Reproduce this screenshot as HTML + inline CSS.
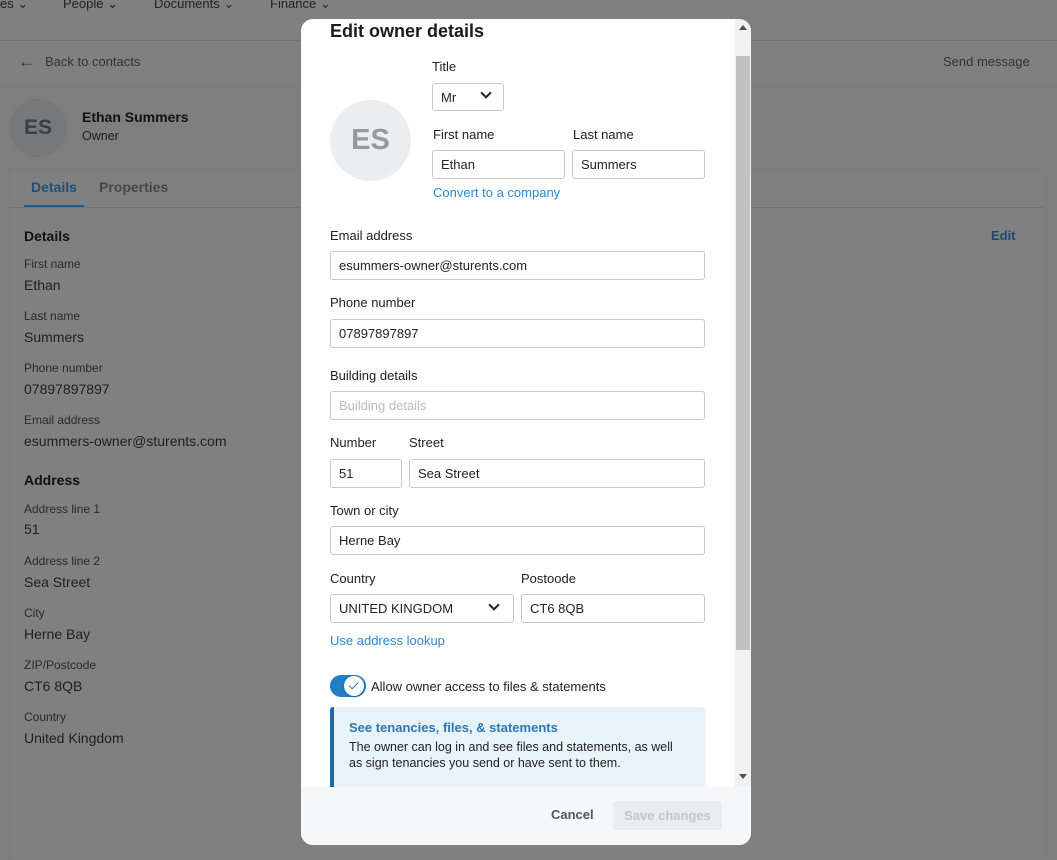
<!DOCTYPE html>
<html><head><style>
*{box-sizing:border-box;margin:0;padding:0}
body{width:1057px;height:860px;overflow:hidden;background:#808080;font-family:"Liberation Sans",sans-serif;position:relative;color:#1a1a1a}
.a{position:absolute;white-space:nowrap}
.bg{color:#1f1f1f;font-size:13px}
.in{position:absolute;border:1px solid #c8c8c8;border-radius:3px;height:29px;font-size:13px;padding:6px 8px;color:#222;background:#fff}
.chev{position:absolute;width:8px;height:8px;border-right:2px solid #222;border-bottom:2px solid #222;transform:rotate(45deg)}
.ml{font-size:13px;color:#222}
</style></head><body>
<div class="a bg" style="left:0;top:-4px;color:#222">es ⌄</div>
<div class="a bg" style="left:63px;top:-4px;color:#222">People ⌄</div>
<div class="a bg" style="left:154px;top:-4px;color:#222">Documents ⌄</div>
<div class="a bg" style="left:270px;top:-4px;color:#222">Finance ⌄</div>
<div class="a" style="left:0;top:40px;width:1057px;height:1px;background:#737373"></div>
<div class="a" style="left:0;top:84px;width:1057px;height:776px;background:#7d7e7d"></div>
<div class="a bg" style="left:18px;top:52px;font-size:17px;color:#333">←</div>
<div class="a bg" style="left:45px;top:54px;color:#333">Back to contacts</div>
<div class="a bg" style="left:943px;top:54px;color:#333">Send message</div>
<div class="a" style="left:9px;top:99px;width:58px;height:58px;border-radius:50%;background:#777879;color:#3c3f42;font-weight:bold;font-size:21px;text-align:center;line-height:58px">ES</div>
<div class="a bg" style="left:82px;top:109px;font-size:14px;font-weight:bold;color:#111">Ethan Summers</div>
<div class="a bg" style="left:82px;top:129px;font-size:12.5px">Owner</div>
<div class="a" style="left:10px;top:171px;width:1033px;height:689px;background:#808080;border-radius:6px"></div>
<div class="a" style="left:10px;top:207px;width:1033px;height:1px;background:#737373"></div>
<div class="a" style="left:31px;top:179px;font-size:14px;font-weight:bold;color:#1f4f7a">Details</div>
<div class="a" style="left:24px;top:205px;width:60px;height:2px;background:#1f5a8c"></div>
<div class="a" style="left:99px;top:179px;font-size:14px;font-weight:bold;color:#474747">Properties</div>
<div class="a" style="left:991px;top:228px;font-size:13px;font-weight:bold;color:#1f4a70">Edit</div>
<div class="a" style="left:24px;top:228px;font-size:14px;font-weight:bold;color:#111">Details</div>
<div class="a bg" style="left:24px;top:257px;font-size:12px;color:#2a2a2a">First name</div><div class="a bg" style="left:24px;top:277px;font-size:14px">Ethan</div>
<div class="a bg" style="left:24px;top:309px;font-size:12px;color:#2a2a2a">Last name</div><div class="a bg" style="left:24px;top:329px;font-size:14px">Summers</div>
<div class="a bg" style="left:24px;top:361px;font-size:12px;color:#2a2a2a">Phone number</div><div class="a bg" style="left:24px;top:381px;font-size:14px">07897897897</div>
<div class="a bg" style="left:24px;top:413px;font-size:12px;color:#2a2a2a">Email address</div><div class="a bg" style="left:24px;top:433px;font-size:14px">esummers-owner@sturents.com</div>
<div class="a" style="left:24px;top:472px;font-size:14px;font-weight:bold;color:#111">Address</div>
<div class="a bg" style="left:24px;top:502px;font-size:12px;color:#2a2a2a">Address line 1</div><div class="a bg" style="left:24px;top:521px;font-size:14px">51</div>
<div class="a bg" style="left:24px;top:554px;font-size:12px;color:#2a2a2a">Address line 2</div><div class="a bg" style="left:24px;top:574px;font-size:14px">Sea Street</div>
<div class="a bg" style="left:24px;top:606px;font-size:12px;color:#2a2a2a">City</div><div class="a bg" style="left:24px;top:626px;font-size:14px">Herne Bay</div>
<div class="a bg" style="left:24px;top:658px;font-size:12px;color:#2a2a2a">ZIP/Postcode</div><div class="a bg" style="left:24px;top:678px;font-size:14px">CT6 8QB</div>
<div class="a bg" style="left:24px;top:710px;font-size:12px;color:#2a2a2a">Country</div><div class="a bg" style="left:24px;top:730px;font-size:14px">United Kingdom</div>

<div class="a" style="left:301px;top:19px;width:450px;height:826px;background:#fff;border-radius:12px;overflow:hidden">
 <div class="a" style="left:0;top:768px;width:450px;height:58px;background:#f6f7f9"></div>
 <div class="a" style="left:434px;top:0;width:16px;height:768px;background:#f1f1f1"></div>
 <div class="a" style="left:435px;top:37px;width:14px;height:594px;background:#c1c1c1"></div>
 <div class="a" style="left:438px;top:6px;width:0;height:0;border:4px solid transparent;border-bottom:5px solid #505050;border-top:0"></div>
 <div class="a" style="left:438px;top:755px;width:0;height:0;border:4px solid transparent;border-top:5px solid #505050;border-bottom:0"></div>
</div>
<div class="a" style="left:330px;top:21px;font-size:18px;font-weight:bold;color:#1a1a1a">Edit owner details</div>
<div class="a ml" style="left:432px;top:59px">Title</div>
<div class="in" style="left:432px;top:83px;width:72px;height:28px">Mr</div>
<div class="chev" style="left:482px;top:89px"></div>
<div class="a" style="left:330px;top:100px;width:81px;height:81px;border-radius:50%;background:#ecedef;color:#929aa2;font-weight:bold;font-size:29px;text-align:center;line-height:81px">ES</div>
<div class="a ml" style="left:433px;top:127px">First name</div>
<div class="a ml" style="left:573px;top:127px">Last name</div>
<div class="in" style="left:432px;top:150px;width:133px">Ethan</div>
<div class="in" style="left:572px;top:150px;width:133px">Summers</div>
<div class="a" style="left:433px;top:185px;font-size:13px;color:#2a8ad6">Convert to a company</div>
<div class="a ml" style="left:330px;top:228px">Email address</div>
<div class="in" style="left:330px;top:251px;width:375px">esummers-owner@sturents.com</div>
<div class="a ml" style="left:330px;top:295px">Phone number</div>
<div class="in" style="left:330px;top:319px;width:375px">07897897897</div>
<div class="a ml" style="left:330px;top:368px">Building details</div>
<div class="in" style="left:330px;top:391px;width:375px;color:#bbb">Building details</div>
<div class="a ml" style="left:330px;top:435px">Number</div>
<div class="a ml" style="left:409px;top:435px">Street</div>
<div class="in" style="left:330px;top:459px;width:72px">51</div>
<div class="in" style="left:409px;top:459px;width:296px">Sea Street</div>
<div class="a ml" style="left:330px;top:503px">Town or city</div>
<div class="in" style="left:330px;top:526px;width:375px">Herne Bay</div>
<div class="a ml" style="left:330px;top:571px">Country</div>
<div class="a ml" style="left:521px;top:571px">Postoode</div>
<div class="in" style="left:330px;top:594px;width:184px">UNITED KINGDOM</div>
<div class="chev" style="left:490px;top:601px"></div>
<div class="in" style="left:521px;top:594px;width:184px">CT6 8QB</div>
<div class="a" style="left:330px;top:633px;font-size:13px;color:#2a8ad6">Use address lookup</div>
<div class="a" style="left:330px;top:675px;width:36px;height:22px;border-radius:11px;background:#1e7fc8"></div>
<div class="a" style="left:344px;top:676px;width:20px;height:20px;border-radius:50%;background:#fff;box-shadow:0 1px 2px rgba(0,0,0,.3)"></div>
<div class="a" style="left:351px;top:680px;width:5px;height:9px;border-right:1.5px solid #1e7fc8;border-bottom:1.5px solid #1e7fc8;transform:rotate(45deg)"></div>
<div class="a ml" style="left:371px;top:679px">Allow owner access to files &amp; statements</div>
<div class="a" style="left:330px;top:707px;width:375px;height:80px;background:#e8f2f9;border-left:4px solid #1e6aa6;border-radius:3px 3px 0 0"></div>
<div class="a" style="left:349px;top:720px;font-size:13px;font-weight:bold;color:#2a78b8">See tenancies, files, &amp; statements</div>
<div class="a" style="left:349px;top:739px;font-size:12.5px;line-height:16px;color:#222;white-space:normal;width:340px">The owner can log in and see files and statements, as well as sign tenancies you send or have sent to them.</div>
<div class="a" style="left:551px;top:807px;font-size:13px;font-weight:bold;color:#555">Cancel</div>
<div class="a" style="left:613px;top:801px;width:109px;height:29px;border-radius:3px;background:#ebeced;color:#c4c7ca;font-size:13px;font-weight:bold;text-align:center;line-height:29px">Save changes</div>
</body></html>
